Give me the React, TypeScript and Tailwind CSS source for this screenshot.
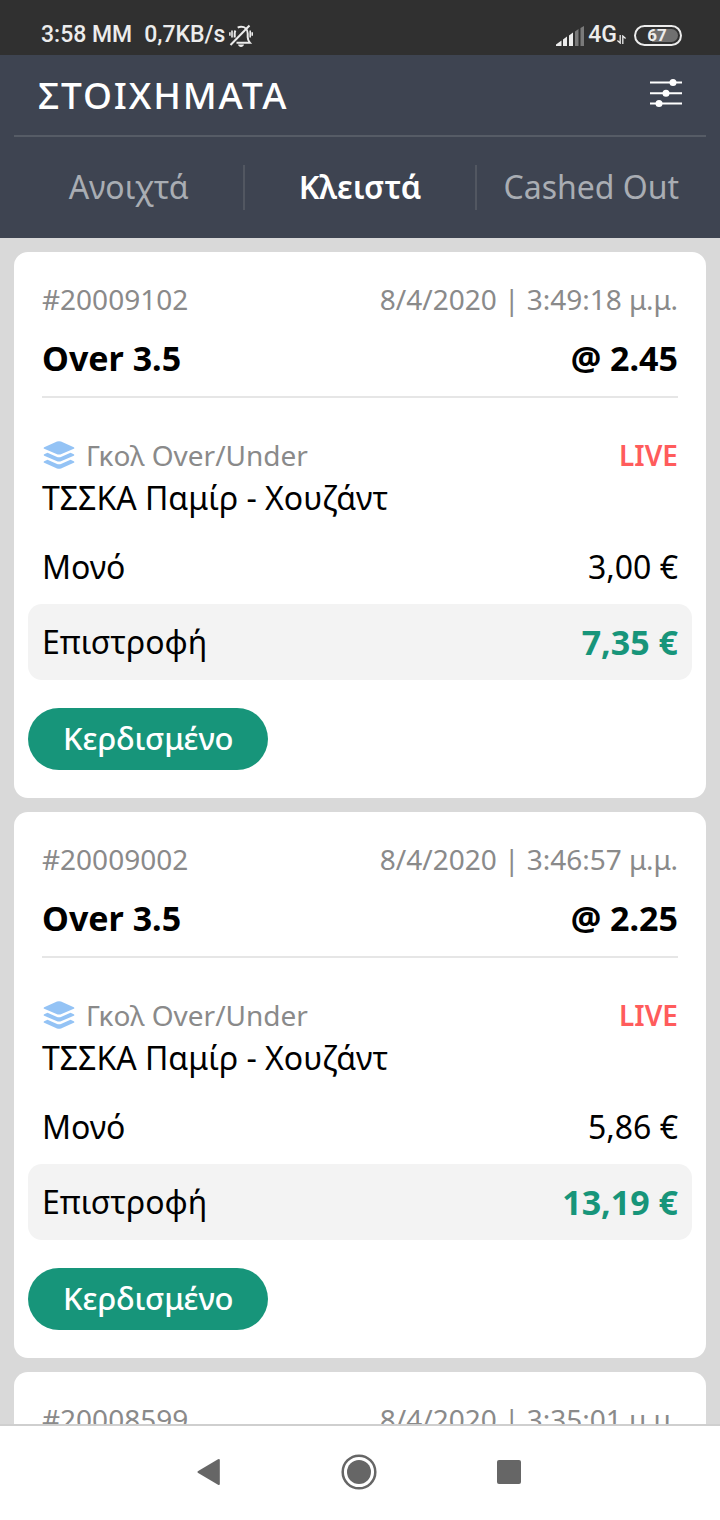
import { useState } from "react";

type Bet = {
  id: string;
  date: string;
  pick: string;
  odds: string;
  market: string;
  match: string;
  stake: string;
  payout: string;
};

const bets: Bet[] = [
  {
    id: "#20009102",
    date: "8/4/2020 | 3:49:18 μ.μ.",
    pick: "Over 3.5",
    odds: "@ 2.45",
    market: "Γκολ Over/Under",
    match: "ΤΣΣΚΑ Παμίρ - Χουζάντ",
    stake: "3,00 €",
    payout: "7,35 €",
  },
  {
    id: "#20009002",
    date: "8/4/2020 | 3:46:57 μ.μ.",
    pick: "Over 3.5",
    odds: "@ 2.25",
    market: "Γκολ Over/Under",
    match: "ΤΣΣΚΑ Παμίρ - Χουζάντ",
    stake: "5,86 €",
    payout: "13,19 €",
  },
  {
    id: "#20008599",
    date: "8/4/2020 | 3:35:01 μ.μ.",
    pick: "Over 3.5",
    odds: "@ 2.25",
    market: "Γκολ Over/Under",
    match: "ΤΣΣΚΑ Παμίρ - Χουζάντ",
    stake: "5,00 €",
    payout: "11,25 €",
  },
];

const tabs = ["Ανοιχτά", "Κλειστά", "Cashed Out"];

function MutedBellIcon() {
  return (
    <svg width="24" height="24" viewBox="0 0 24 24" fill="none" stroke="currentColor" aria-hidden="true">
      <path d="M7.500 18.800H21c-1.500-1.700-2.300-3-2.300-5.500V9.500c0-4-2.700-6.700-6.500-6.700-1.300 0-2.500.3-3.500.9M5.700 9.500c0-1.200.2-2.200.7-3.100M5.700 9v4.500" strokeWidth="2" />
      <path d="M1.500 21L20.500 1.500" strokeWidth="2" />
      <path d="M9 20.500h6c-.3 1.500-1.500 2.400-3 2.400s-2.700-.9-3-2.400z" fill="currentColor" stroke="none" />
      <path d="M3 6.500v7M.9 8.300v3.400M21.200 6.500v7M23.200 8.300v3.400" strokeWidth="1.600" />
    </svg>
  );
}

function SignalIcon() {
  return (
    <svg width="28" height="20" viewBox="0 0 28 20" fill="currentColor" aria-hidden="true">
      <path d="M0 20v-1.500L5.500 14.500V20zM7 20v-6.500L11 10.500V20zM13 20V9.500L17 6.500V20z" />
      <path d="M19 20V5.500L22.500 3V20zM24.500 20V2L28 0v20z" opacity=".4" />
    </svg>
  );
}

function DataArrowsIcon() {
  return (
    <svg width="9" height="9" viewBox="0 0 9 9" fill="none" stroke="currentColor" strokeWidth="1.300" aria-hidden="true">
      <path d="M3.200 0v8L.4 5.500M5.800 9V1l2.800 2.500" />
    </svg>
  );
}

function Battery() {
  return (
    <span className="relative flex h-[21px] w-12 items-center justify-center rounded-full border-2 border-current">
      <span className="absolute inset-y-0.5 right-0.5 left-4 rounded-r-full bg-[#707070]" />
      <span className="relative mr-0.5 text-[17px] leading-none font-bold">67</span>
    </span>
  );
}

function StatusBar() {
  return (
    <div className="flex h-[55px] shrink-0 items-center justify-between bg-[#303030] pt-4 pr-[38px] pl-[41px] font-[Roboto,sans-serif] text-[23px] font-medium text-[#ececec]">
      <div className="flex items-center">
        <span>3:58 MM</span>
        <span className="mr-1 ml-3">0,7KB/s</span>
        <MutedBellIcon />
      </div>
      <div className="flex items-center">
        <SignalIcon />
        <span className="ml-1">4G</span>
        <span className="mr-2 pt-2">
          <DataArrowsIcon />
        </span>
        <Battery />
      </div>
    </div>
  );
}

function FilterIcon() {
  return (
    <svg width="32" height="30" viewBox="0 0 32 30" fill="currentColor" aria-hidden="true">
      <path d="M0 3.500h32v2H0zM0 14.300h32v2H0zM0 24.500h32v2H0z" />
      <circle cx="23" cy="4.500" r="3.500" />
      <circle cx="16" cy="15.300" r="3.500" />
      <circle cx="9" cy="25.500" r="3.500" />
    </svg>
  );
}

function LayersIcon() {
  return (
    <svg width="34" height="28" viewBox="-1 0 34 28" fill="#94c3f5" aria-hidden="true">
      <path d="M14 .6Q16-.3 18 .6L30.800 6.200Q32 7 30.800 7.800L18.500 13Q16 14 13.500 13L1.200 7.800Q0 7 1.200 6.200z" />
      <path d="M1.200 13.200L4.500 11.800 13.500 15.800Q16 16.800 18.500 15.800L27.500 11.800 30.800 13.200Q32 14 30.800 14.800L18.500 20Q16 21 13.500 20L1.200 14.800Q0 14 1.200 13.200z" />
      <path d="M1.200 20.200L4.500 18.800 13.500 22.800Q16 23.800 18.500 22.800L27.500 18.800 30.800 20.200Q32 21 30.800 21.800L18 27.400Q16 28.300 14 27.400L1.200 21.800Q0 21 1.200 20.200z" />
    </svg>
  );
}

function BetCard({ bet }: { bet: Bet }) {
  return (
    <article className="shrink-0 rounded-[14px] bg-white px-[14px] py-7">
      <div className="px-[14px]">
        <div className="flex justify-between text-[28px] leading-[38px] text-[#8a8a8a]">
          <span>{bet.id}</span>
          <span>{bet.date}</span>
        </div>
        <div className="mt-[18px] flex justify-between border-b-2 border-[#e6e6e6] pb-4 text-[34px] leading-[44px] font-bold">
          <h2>{bet.pick}</h2>
          <span>{bet.odds}</span>
        </div>
        <div className="mt-[38px] flex items-center text-[28px] leading-[38px]">
          <LayersIcon />
          <span className="ml-[10px] text-[#8a8a8a]">{bet.market}</span>
          <span className="ml-auto font-semibold text-[#ff5c5c]">LIVE</span>
        </div>
        <p className="mt-0.5 text-[32px] leading-[44px]">{bet.match}</p>
        <div className="mt-[25px] flex justify-between text-[32px] leading-[44px]">
          <span>Μονό</span>
          <span>{bet.stake}</span>
        </div>
      </div>
      <div className="mt-[15px] flex justify-between rounded-[14px] bg-[#f3f3f3] px-[14px] py-4 text-[32px] leading-[44px]">
        <span>Επιστροφή</span>
        <span className="text-[34px] font-bold text-[#17957a]">{bet.payout}</span>
      </div>
      <span className="mt-7 inline-block rounded-full bg-[#17957a] px-[35px] pt-2 pb-[10px] align-top text-[31px] leading-[44px] font-medium text-white">
        Κερδισμένο
      </span>
    </article>
  );
}

function SystemNav() {
  return (
    <nav className="flex h-24 shrink-0 items-center justify-center gap-[114px] border-t-2 border-[#cfcfcf] bg-white pr-0.5 pb-0.5 text-[#666]">
      <button type="button" aria-label="Back" className="flex w-9 justify-center">
        <svg width="24" height="28" viewBox="0 0 24 28" fill="currentColor" aria-hidden="true">
          <path d="M.8 13.200Q0 14 .8 14.800L21 26.800Q22.800 27.500 22.800 26V2Q22.800.5 21 1.200z" />
        </svg>
      </button>
      <button type="button" aria-label="Home" className="flex w-9 justify-center">
        <svg width="36" height="36" viewBox="0 0 36 36" aria-hidden="true">
          <circle cx="18" cy="18" r="16.300" fill="none" stroke="currentColor" strokeWidth="2.500" />
          <circle cx="18" cy="18" r="12" fill="currentColor" />
        </svg>
      </button>
      <button type="button" aria-label="Recent apps" className="flex w-9 justify-center">
        <span className="size-6 rounded-[2px] bg-[#666]" />
      </button>
    </nav>
  );
}

export default function App() {
  const [active, setActive] = useState("Κλειστά");

  return (
    <div className="flex h-screen flex-col bg-[#d9d9d9] font-['Noto_Sans',sans-serif] text-black">
      <StatusBar />
      <header className="shrink-0 bg-[#3e4451] px-[14px]">
        <div className="flex h-[82px] items-center justify-between border-b-2 border-[#565c66] px-6">
          <h1 className="text-[37px] font-medium tracking-wider text-white">ΣΤΟΙΧΗΜΑΤΑ</h1>
          <button type="button" aria-label="Φίλτρα" className="pb-1 text-white">
            <FilterIcon />
          </button>
        </div>
        <div className="flex divide-x-2 divide-[#525761] py-7">
          {tabs.map((tab) => (
            <button
              key={tab}
              type="button"
              onClick={() => setActive(tab)}
              className={
                tab === active
                  ? "flex-1 basis-0 pb-0.5 text-[32px] leading-[43px] font-semibold text-white"
                  : "flex-1 basis-0 pb-0.5 text-[32px] leading-[43px] text-[#a9adb3]"
              }
            >
              {tab}
            </button>
          ))}
        </div>
      </header>
      <main className="flex min-h-0 flex-1 flex-col gap-[14px] overflow-y-auto p-[14px] [scrollbar-width:none]">
        {bets.map((bet) => (
          <BetCard key={bet.id} bet={bet} />
        ))}
      </main>
      <SystemNav />
    </div>
  );
}
